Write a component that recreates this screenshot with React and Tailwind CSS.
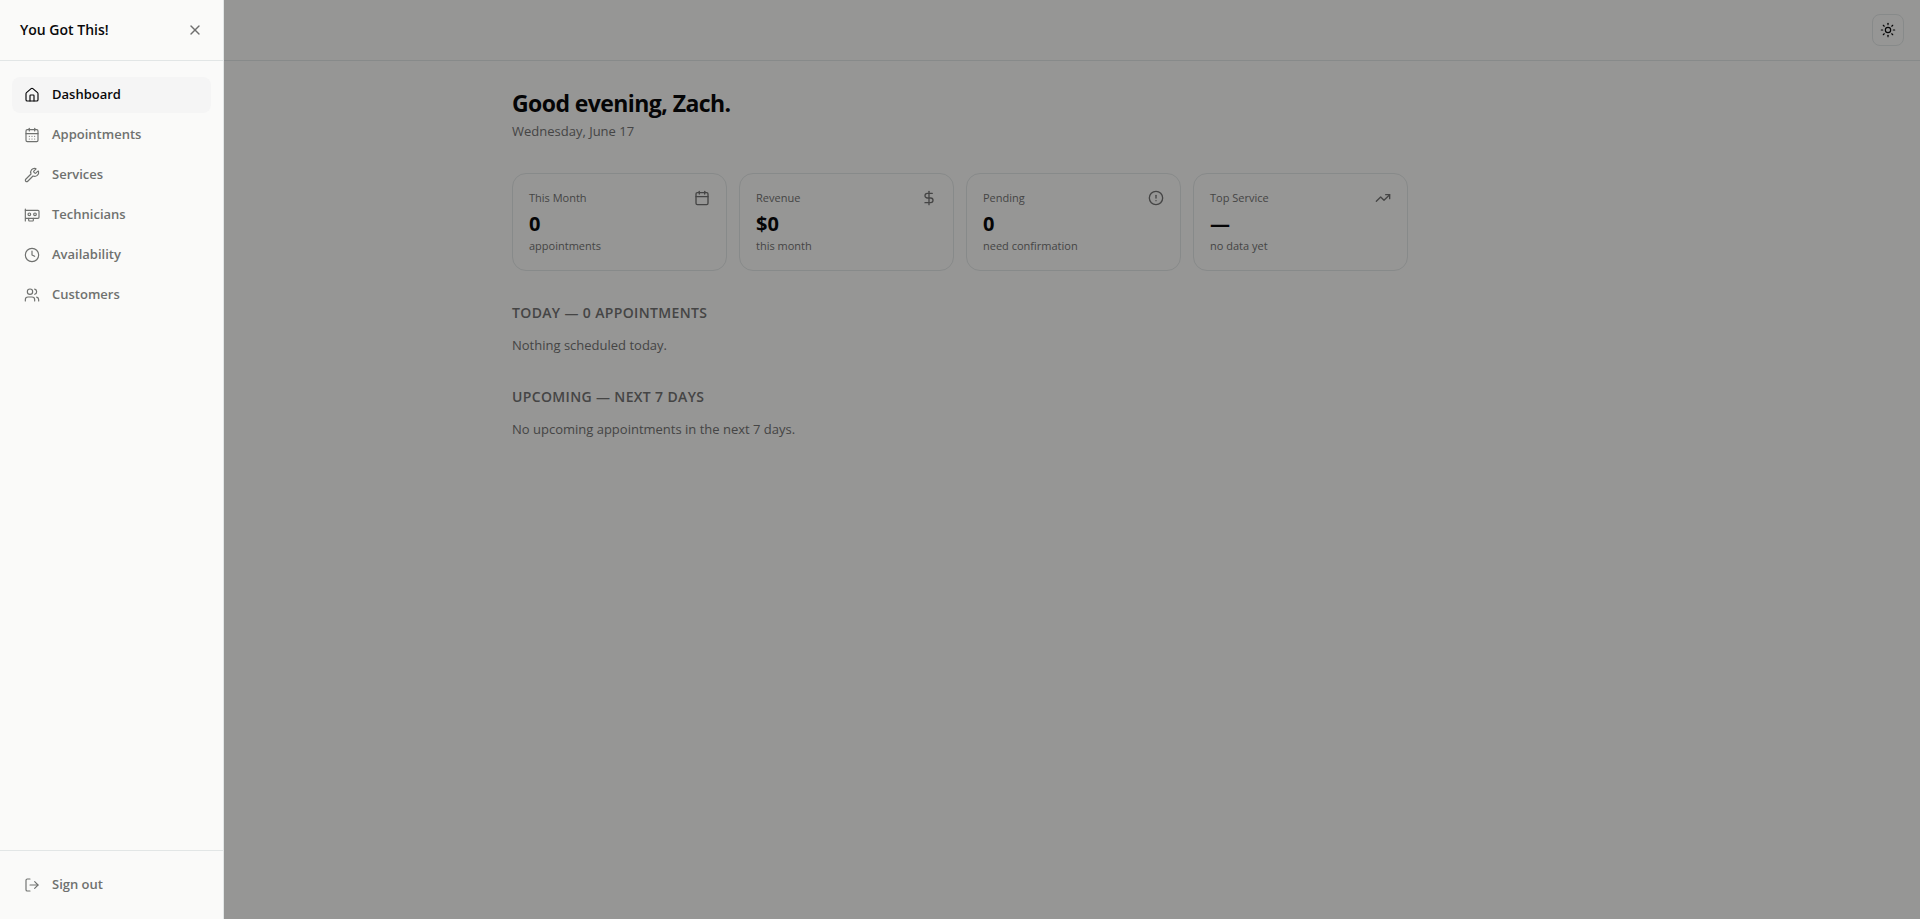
import {
  CalendarDays,
  Calendar,
  CircleAlert,
  Clock,
  DollarSign,
  House,
  LogOut,
  Sun,
  TrendingUp,
  Users,
  Wrench,
  X,
} from "lucide-react"

function GpuIcon({ className, strokeWidth = 2 }) {
  return (
    <svg
      viewBox="0 0 24 24"
      fill="none"
      stroke="currentColor"
      strokeWidth={strokeWidth}
      strokeLinecap="round"
      strokeLinejoin="round"
      className={className}
      aria-hidden="true"
    >
      <path d="M2 21V3" />
      <path d="M2 5h19a1.5 1.5 0 0 1 1.5 1.5v9a1.5 1.5 0 0 1-1.5 1.5H2.26" />
      <path d="M7 17v3a1 1 0 0 0 1 1h5a1 1 0 0 0 1-1v-3" />
      <circle cx="16.5" cy="11" r="2" />
      <circle cx="8" cy="11" r="2" />
    </svg>
  )
}

const navItems = [
  { label: "Dashboard", icon: House, active: true },
  { label: "Appointments", icon: CalendarDays },
  { label: "Services", icon: Wrench },
  { label: "Technicians", icon: GpuIcon },
  { label: "Availability", icon: Clock },
  { label: "Customers", icon: Users },
]

const stats = [
  { label: "This Month", value: "0", hint: "appointments", icon: Calendar },
  { label: "Revenue", value: "$0", hint: "this month", icon: DollarSign },
  { label: "Pending", value: "0", hint: "need confirmation", icon: CircleAlert },
  { label: "Top Service", value: "—", hint: "no data yet", icon: TrendingUp },
]

const sections = [
  { title: "Today — 0 appointments", empty: "Nothing scheduled today." },
  { title: "Upcoming — next 7 days", empty: "No upcoming appointments in the next 7 days." },
]

function Sidebar() {
  return (
    <aside className="fixed inset-y-0 left-0 z-20 flex w-56 flex-col border-r border-[#e2e6e6] bg-[#fafaf9]">
      <div className="flex h-[61px] items-center justify-between border-b border-[#e2e6e6] px-5">
        <span className="text-sm font-semibold">You Got This!</span>
        <button type="button" aria-label="Close menu" className="text-[#6f6f6f]">
          <X className="size-4" />
        </button>
      </div>

      <nav className="flex flex-1 flex-col gap-1 px-3 py-4">
        {navItems.map(({ label, icon: Icon, active }) => (
          <a
            key={label}
            href="#"
            className={`flex h-9 items-center gap-3 rounded-lg px-3 text-[13px] font-semibold ${
              active ? "bg-[#f5f5f5] text-[#09090b]" : "text-[#6f716f]"
            }`}
          >
            <Icon className="size-4" strokeWidth={1.75} />
            {label}
          </a>
        ))}
      </nav>

      <div className="border-t border-[#e2e6e6] px-3 py-4">
        <button
          type="button"
          className="flex h-9 w-full items-center gap-3 rounded-lg px-3 text-[13px] font-semibold text-[#6f716f]"
        >
          <LogOut className="size-4" strokeWidth={1.75} />
          Sign out
        </button>
      </div>
    </aside>
  )
}

function StatCard({ label, value, hint, icon: Icon }) {
  return (
    <div className="rounded-[14px] border border-[#e2e6e6] p-4 text-[#737373]">
      <div className="flex items-center justify-between">
        <span className="text-[11px] leading-4">{label}</span>
        <Icon className="size-4" />
      </div>
      <p className="mt-1 text-xl font-bold text-[#09090b]">{value}</p>
      <p className="text-[11px] leading-4">{hint}</p>
    </div>
  )
}

export default function App() {
  return (
    <div className="min-h-screen bg-[#fafaf8] font-['Open_Sans','Noto_Sans',sans-serif] text-[#09090b]">
      <header className="flex h-[61px] items-center justify-end border-b border-[#e2e6e6] px-4">
        <button
          type="button"
          aria-label="Toggle theme"
          className="flex size-8 items-center justify-center rounded-lg border border-[#e2e6e6]"
        >
          <Sun className="size-4" strokeWidth={1.75} />
        </button>
      </header>

      <main className="mx-auto max-w-4xl py-6">
        <h1 className="text-[23px] leading-9 font-bold tracking-tight">Good evening, Zach.</h1>
        <p className="text-[13px] leading-5 text-[#737373]">Wednesday, June 17</p>

        <div className="mt-8 grid grid-cols-4 gap-3">
          {stats.map((stat) => (
            <StatCard key={stat.label} {...stat} />
          ))}
        </div>

        {sections.map(({ title, empty }) => (
          <section key={title} className="mt-8 text-[#737373]">
            <h2 className="text-sm font-semibold tracking-wide uppercase">{title}</h2>
            <p className="mt-3 text-[13px] leading-5">{empty}</p>
          </section>
        ))}
      </main>

      <div className="fixed inset-0 z-10 bg-black/40" />
      <Sidebar />
    </div>
  )
}
